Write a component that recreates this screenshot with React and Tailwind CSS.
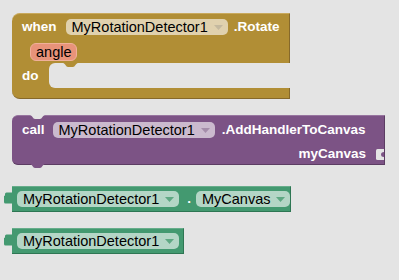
const notchPath = 'M0 0 C2 0 3 4 5 4 H10 C12 4 13 0 15 0 Z';

function Dropdown({ label, bg, arrow, className = '' }) {
    return (
        <div className={`flex h-[16px] shrink-0 items-center rounded-[5px] pl-[6px] pr-[5px] ${bg} ${className}`}>
            <span className="text-[14.5px] leading-none text-black">{label}</span>
            <svg width="9" height="5" viewBox="0 0 9 5" className="ml-[6px]">
                <path d="M0 0H9L4.5 5Z" fill={arrow} />
            </svg>
        </div>
    );
}

const Label = ({ children, className = '' }) => (
    <span className={`text-[13.5px] font-bold leading-none text-white ${className}`}>{children}</span>
);

function EventBlock() {
    return (
        <div className="ml-[8px] flex w-[278px] flex-col">
            <div className="flex h-[50px] flex-col rounded-tl-[8px] border-t border-r border-t-[#c9a95c] border-r-[#86692a] bg-[#b18e35] pl-[10px] pt-[5px]">
                <div className="flex h-[16px] items-center">
                    <Label>when</Label>
                    <Dropdown label="MyRotationDetector1" bg="bg-[#e0d1ae]" arrow="#c4b99f" className="ml-[9px]" />
                    <Label className="ml-[6px]">.Rotate</Label>
                </div>
                <div className="mt-[8px] flex">
                    <div className="ml-[8px] flex h-[18px] items-center rounded-[6px] border border-[#f0b09a] bg-[#e8937a] px-[5px]">
                        <span className="text-[14.5px] leading-none text-black">angle</span>
                    </div>
                </div>
            </div>
            <div className="flex h-[25px]">
                <div className="flex w-[37px] items-center bg-[#b18e35] pl-[10px]">
                    <Label>do</Label>
                </div>
                <div className="flex-1 bg-[#b18e35]">
                    <div className="h-full rounded-l-[6px] bg-[#e4e4e4] pl-[14px]">
                        <svg width="15" height="5" viewBox="0 0 15 5" className="block">
                            <path d={notchPath} fill="#b18e35" />
                        </svg>
                    </div>
                </div>
            </div>
            <div className="h-[11px] rounded-bl-[8px] border-r border-b border-r-[#86692a] border-b-[#86692a] bg-[#b18e35]" />
        </div>
    );
}

function CallBlock() {
    return (
        <div className="relative ml-[8px] mt-[16px] flex h-[50px] w-[373px] flex-col rounded-l-[6px] border-t border-r border-b border-t-[#97749f] border-r-[#5c3c63] border-b-[#5c3c63] bg-[#7c5385] pl-[10px] pt-[6px]">
            <svg width="15" height="5" viewBox="0 0 15 5" className="absolute left-[18px] top-[-1px]">
                <path d={notchPath} fill="#e4e4e4" />
            </svg>
            <div className="flex h-[16px] items-center">
                <Label>call</Label>
                <Dropdown label="MyRotationDetector1" bg="bg-[#cbbace]" arrow="#a58daa" className="ml-[8px]" />
                <Label className="ml-[7px]">.AddHandlerToCanvas</Label>
            </div>
            <div className="mt-[8px] flex h-[16px] items-center justify-end">
                <Label>myCanvas</Label>
                <svg width="8" height="11" viewBox="0 0 8 11" className="ml-[10px]">
                    <path d="M8 0 H1.5 Q0 0 0 1.5 V9.5 Q0 11 1.5 11 H8 Z" fill="#e4e4e4" />
                    <path d="M8 3 Q5 3 5 5.5 Q5 8 8 8 Z" fill="#7c5385" />
                </svg>
            </div>
            <svg width="15" height="5" viewBox="0 0 15 5" className="absolute bottom-[-5px] left-[18px]">
                <path d={notchPath} fill="#7c5385" />
            </svg>
        </div>
    );
}

function ValueBlock({ width, className = '', children }) {
    return (
        <div className={`flex items-start ${className}`}>
            <svg width="8" height="12" viewBox="0 0 8 12" className="mt-[6px]">
                <path d="M8 0.5 H2.5 Q1 0.5 1 2 V3 Q1 4 0 4 V10 Q0 11.5 1.5 11.5 H8 Z" fill="#439970" />
            </svg>
            <div className={`flex h-[26px] items-center border-t border-r border-b border-t-[#67ad8b] border-r-[#2e7653] border-b-[#2e7653] bg-[#439970] pl-[5px] ${width}`}>
                {children}
            </div>
        </div>
    );
}

export default function App() {
    return (
        <div className="flex h-[280px] w-[399px] flex-col overflow-hidden bg-[#e4e4e4] px-[4px] pt-[13px] font-['Liberation_Sans',Arial,sans-serif]">
            <EventBlock />
            <CallBlock />
            <ValueBlock width="w-[279px]" className="mt-[21px]">
                <Dropdown label="MyRotationDetector1" bg="bg-[#b4d6c6]" arrow="#5fa883" />
                <Label className="ml-[8px]">.</Label>
                <Dropdown label="MyCanvas" bg="bg-[#b4d6c6]" arrow="#5fa883" className="ml-[5px]" />
            </ValueBlock>
            <ValueBlock width="w-[172px]" className="mt-[16px]">
                <Dropdown label="MyRotationDetector1" bg="bg-[#b4d6c6]" arrow="#5fa883" />
            </ValueBlock>
        </div>
    );
}
